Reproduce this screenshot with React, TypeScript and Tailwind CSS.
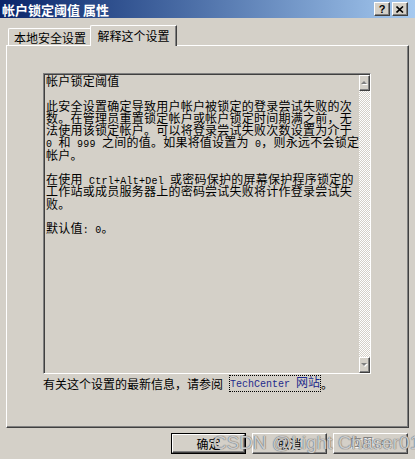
import type { ReactNode } from 'react';

const mono = "font-['Liberation_Mono',monospace] text-[10px]";

function M({ children }: { children: ReactNode }) {
  return <span className={mono}>{children}</span>;
}

// explanation text, one entry per visual line
const lines: ReactNode[] = [
  '帐户锁定阈值',
  '',
  '此安全设置确定导致用户帐户被锁定的登录尝试失败的次',
  '数。在管理员重置锁定帐户或帐户锁定时间期满之前，无',
  '法使用该锁定帐户。可以将登录尝试失败次数设置为介于',
  <>
    <M>0 </M>和<M> 999 </M>之间的值。如果将值设置为<M> 0</M>，则永远不会锁定
  </>,
  '帐户。',
  '',
  <>
    在使用<M> Ctrl+Alt+Del </M>或密码保护的屏幕保护程序锁定的
  </>,
  '工作站或成员服务器上的密码尝试失败将计作登录尝试失',
  '败。',
  '',
  <>
    默认值<M>: 0</M>。
  </>,
];

const raised =
  'border border-t-white border-l-white border-r-[#404040] border-b-[#404040] shadow-[inset_-1px_-1px_#808080] bg-[#d4d0c8]';

function TitleBtn({ children }: { children: ReactNode }) {
  return (
    <div className={`flex h-[14px] w-[16px] items-center justify-center ${raised}`}>{children}</div>
  );
}

function Arrow({ up }: { up?: boolean }) {
  return (
    <svg width="9" height="6" viewBox="0 0 9 6">
      <path d={up ? 'M2 5 L5 2 L8 5 Z' : 'M2 2 L8 2 L5 5 Z'} fill="#ffffff" />
      <path d={up ? 'M1 4 L4 1 L7 4 Z' : 'M1 1 L7 1 L4 4 Z'} fill="#808080" />
    </svg>
  );
}

function DlgButton({ children, isDefault, disabled }: { children: ReactNode; isDefault?: boolean; disabled?: boolean }) {
  const face = (
    <div className={`flex h-full w-full items-center justify-center ${raised}`}>
      <span className={disabled ? 'text-[#808080] [text-shadow:1px_1px_#ffffff]' : ''}>{children}</span>
    </div>
  );
  return (
    <div className={`h-[21px] w-[75px] leading-[12px] ${isDefault ? 'border border-black' : ''}`}>{face}</div>
  );
}

export default function App() {
  return (
    <div className="relative flex h-[459px] w-[415px] flex-col overflow-hidden bg-[#d4d0c8] font-['Noto_Sans_CJK_SC',sans-serif] text-[12px] text-black">
      {/* Title bar */}
      <div className="flex h-[18px] shrink-0 items-center bg-gradient-to-r from-[#0a246a] to-[#a6caf0] pl-[2px] pr-[7px]">
        <span className="text-[13px] font-bold leading-none text-white">帐户锁定阈值 属性</span>
        <div className="ml-auto flex gap-[2px]">
          <TitleBtn>
            <span className="font-['Liberation_Sans',sans-serif] text-[11px] font-bold leading-none">?</span>
          </TitleBtn>
          <TitleBtn>
            <svg width="8" height="7" viewBox="0 0 8 7">
              <path d="M0.5 0.5 L7 6.5 M7 0.5 L0.5 6.5" stroke="#000" strokeWidth="1.6" />
            </svg>
          </TitleBtn>
        </div>
      </div>

      {/* Tabs */}
      <div className="flex h-[27px] shrink-0 items-end pl-[8px] leading-[12px]">
        <div className="flex h-[17px] w-[84px] justify-center rounded-tl-[2px] border-l border-t border-r border-white border-r-[#404040] pt-[3px] shadow-[inset_-1px_0_#808080]">
          本地安全设置
        </div>
        <div className="relative z-10 -mb-px -ml-[2px] flex h-[21px] w-[87px] justify-center rounded-tl-[2px] border-l border-t border-r border-white border-r-[#404040] bg-[#d4d0c8] pt-[4px] shadow-[inset_-1px_0_#808080]">
          解释这个设置
        </div>
      </div>

      {/* Tab page */}
      <div className="mx-[6px] flex h-[383px] shrink-0 flex-col border border-t-white border-l-white border-r-[#404040] border-b-[#404040] pl-[36px] pt-[27px] shadow-[inset_-1px_-1px_#808080]">
        <div className="flex h-[301px] w-[328px] border border-t-[#808080] border-l-[#808080] border-r-white border-b-white shadow-[inset_1px_1px_#404040]">
          <div className="flex-1 pl-[2px] pt-[1px] tracking-[0.24px]">
            {lines.map((l, i) => (
              <div key={i} className="h-[12.25px] whitespace-pre leading-[12.25px]">
                {l}
              </div>
            ))}
          </div>
          <div className="mt-px flex w-[16px] flex-col">
            <div className={`flex h-[16px] items-center justify-center ${raised}`}>
              <Arrow up />
            </div>
            <div className="flex-1 bg-[image:repeating-conic-gradient(#d4d0c8_0%_25%,#ffffff_0%_50%)] bg-[length:2px_2px]" />
            <div className={`flex h-[16px] items-center justify-center ${raised}`}>
              <Arrow />
            </div>
          </div>
        </div>
        <div className="mt-[1px] flex items-center whitespace-pre leading-[12px]">
          有关这个设置的最新信息，请参阅<M> </M>
          <span className="border border-dotted border-black text-[#1e2a8c]">
            <M>TechCenter </M>网站
          </span>
          。
        </div>
      </div>

      {/* Buttons */}
      <div className="mt-[5px] flex justify-end gap-[6px] pr-[7px]">
        <DlgButton isDefault>确定</DlgButton>
        <DlgButton>取消</DlgButton>
        <DlgButton disabled>
          应用<M>(A)</M>
        </DlgButton>
      </div>

      {/* Watermark */}
      <div className="pointer-events-none absolute left-[213px] top-[432px] whitespace-nowrap font-['Liberation_Sans',sans-serif] text-[19px] leading-[22px] text-[#e6e6e6]/80 [text-shadow:0_0_1px_#666,0_0_1px_#666]">
        CSDN @Light Chaser01
      </div>
    </div>
  );
}
